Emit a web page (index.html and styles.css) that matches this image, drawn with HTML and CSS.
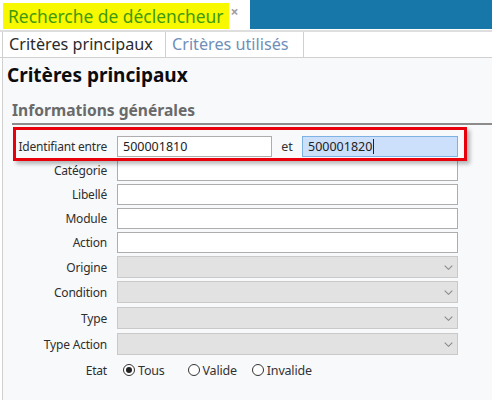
FILE: index.html
```html
<!DOCTYPE html>
<html lang="fr">
<head>
<meta charset="utf-8">
<link rel="stylesheet" href="styles.css">
</head>
<body>
<div class="titlebar">
  <div class="title">Recherche de déclencheur</div>
  <div class="close">×</div>
  <div class="bluebar"></div>
</div>
<div class="tabstrip">
  <div class="tab active">Critères principaux</div>
  <div class="tab">Critères utilisés</div>
</div>
<div class="content">
  <h1 class="heading">Critères principaux</h1>
  <h2 class="group">Informations générales</h2>
  <div class="form">
    <div class="row row-id">
      <label class="lbl">Identifiant entre</label>
      <div class="inp">500001810</div>
      <span class="et">et</span>
      <div class="inp focus">500001820<span class="caret"></span></div>
    </div>
    <div class="row"><label class="lbl">Catégorie</label><div class="inp"></div></div>
    <div class="row"><label class="lbl">Libellé</label><div class="inp"></div></div>
    <div class="row"><label class="lbl">Module</label><div class="inp"></div></div>
    <div class="row"><label class="lbl">Action</label><div class="inp"></div></div>
    <div class="row combo-row first-combo"><label class="lbl">Origine</label><div class="combo"><svg class="chev" viewBox="0 0 9 5" width="9" height="5"><path d="M0.7 0.7 L4.5 4.3 L8.3 0.7" fill="none" stroke="#8a8a8a" stroke-width="1.1"/></svg></div></div>
    <div class="row combo-row"><label class="lbl">Condition</label><div class="combo"><svg class="chev" viewBox="0 0 9 5" width="9" height="5"><path d="M0.7 0.7 L4.5 4.3 L8.3 0.7" fill="none" stroke="#8a8a8a" stroke-width="1.1"/></svg></div></div>
    <div class="row combo-row"><label class="lbl">Type</label><div class="combo"><svg class="chev" viewBox="0 0 9 5" width="9" height="5"><path d="M0.7 0.7 L4.5 4.3 L8.3 0.7" fill="none" stroke="#8a8a8a" stroke-width="1.1"/></svg></div></div>
    <div class="row combo-row"><label class="lbl">Type Action</label><div class="combo"><svg class="chev" viewBox="0 0 9 5" width="9" height="5"><path d="M0.7 0.7 L4.5 4.3 L8.3 0.7" fill="none" stroke="#8a8a8a" stroke-width="1.1"/></svg></div></div>
    <div class="row radio-row">
      <label class="lbl">Etat</label>
      <div class="radios">
        <span class="radio checked"></span><span class="rtext r1">Tous</span>
        <span class="radio"></span><span class="rtext r2">Valide</span>
        <span class="radio"></span><span class="rtext">Invalide</span>
      </div>
    </div>
  </div>
</div>
</body>
</html>
```
FILE: styles.css
```css
html, body {
  margin: 0;
  padding: 0;
}
body {
  width: 492px;
  height: 400px;
  overflow: hidden;
  background: #ffffff;
  font-family: "Noto Sans", "Open Sans", sans-serif;
  color: #333333;
}
.titlebar {
  display: flex;
  height: 30px;
  background: #ffffff;
}
.title {
  margin: 3px 0 1px 3px;
  background: #f8f800;
  color: #3f9a0c;
  font-size: 17.4px;
  line-height: 26px;
  padding: 0 5px 0 5px;
  white-space: nowrap;
}
.close {
  width: 21px;
  color: #a0a0a0;
  font-size: 14px;
  font-weight: bold;
  line-height: 24px;
  padding-left: 2px;
  box-sizing: border-box;
}
.bluebar {
  flex: 1;
  background: #1877a9;
  height: 29px;
}
.tabstrip {
  display: flex;
  height: 25px;
  border-top: 2px solid #dedede;
  border-bottom: 1px solid #d0d0d0;
  padding-left: 2px;
}
.tab {
  font-size: 16.2px;
  line-height: 24px;
  padding: 0 6px;
  color: #6f8fb8;
  border-right: 1px solid #d0d0d0;
  white-space: nowrap;
  background: #ffffff;
}
.tab.active {
  color: #2b2b2b;
  border-left: 1px solid #d0d0d0;
  width: 150px;
}
.tab:not(.active) {
  width: 125px;
}
.content {
  margin-left: 2px;
  border-left: 1px solid #d0d0d0;
  background: #f8f9fb;
  height: 342px;
}
.heading {
  margin: 0;
  padding: 5px 0 0 4px;
  font-size: 19px;
  font-weight: bold;
  line-height: 24px;
  color: #0c0c0c;
}
.group {
  margin: 12px 0 0 9px;
  font-size: 15.6px;
  font-weight: bold;
  color: #6a6a6a;
  line-height: 22px;
  padding-bottom: 2px;
  border-bottom: 2px solid #8c8c8c;
}
.form {
  margin-left: -3px;
  padding-top: 11px;
}
.row {
  display: flex;
  align-items: center;
  height: 21px;
  margin-bottom: 3px;
}
.lbl {
  width: 107px;
  text-align: right;
  font-size: 12px;
  letter-spacing: -0.2px;
  color: #2e2e2e;
  margin-right: 10px;
  white-space: nowrap;
}
.inp {
  box-sizing: border-box;
  width: 341px;
  height: 21px;
  background: #ffffff;
  border: 1px solid #adadad;
  font-size: 12.5px;
  line-height: 19px;
  padding-left: 5px;
  color: #222222;
  display: flex;
  align-items: center;
}
.row-id {
  position: relative;
}
.row-id::before {
  content: "";
  position: absolute;
  left: 13px;
  top: -9px;
  width: 454px;
  height: 34px;
  box-sizing: border-box;
  border: 3px solid #e8000b;
  box-shadow: 3px 3px 4px rgba(0, 0, 0, 0.28);
  pointer-events: none;
}
.row-id .inp {
  width: 155px;
}
.row-id .inp.focus {
  width: 156px;
  background: #cce0fb;
  border-color: #7eb2e2;
}
.et {
  width: 30px;
  text-align: center;
  font-size: 12.5px;
  color: #333333;
}
.caret {
  display: inline-block;
  width: 1px;
  height: 15px;
  background: #222222;
  margin-left: 1px;
}
.combo-row {
  height: 22px;
  margin-bottom: 4px;
}
.first-combo {
  margin-bottom: 3px;
}
.combo {
  box-sizing: border-box;
  width: 341px;
  height: 22px;
  background: #e2e2e2;
  border: 1px solid #c9c9c9;
  display: flex;
  align-items: center;
  justify-content: flex-end;
  padding-right: 4px;
}
.radio-row {
  margin-top: 4px;
  height: 22px;
}
.radios {
  display: flex;
  align-items: center;
  padding-left: 6px;
}
.radio {
  box-sizing: border-box;
  width: 12px;
  height: 12px;
  border: 1px solid #333333;
  border-radius: 50%;
  background: #ffffff;
  display: flex;
  align-items: center;
  justify-content: center;
  margin-right: 3px;
}
.radio.checked::after {
  content: "";
  width: 6px;
  height: 6px;
  border-radius: 50%;
  background: #222222;
}
.rtext {
  font-size: 12.5px;
  letter-spacing: -0.2px;
  color: #333333;
}
.r1 {
  margin-right: 23px;
}
.r2 {
  margin-right: 15px;
}
```
